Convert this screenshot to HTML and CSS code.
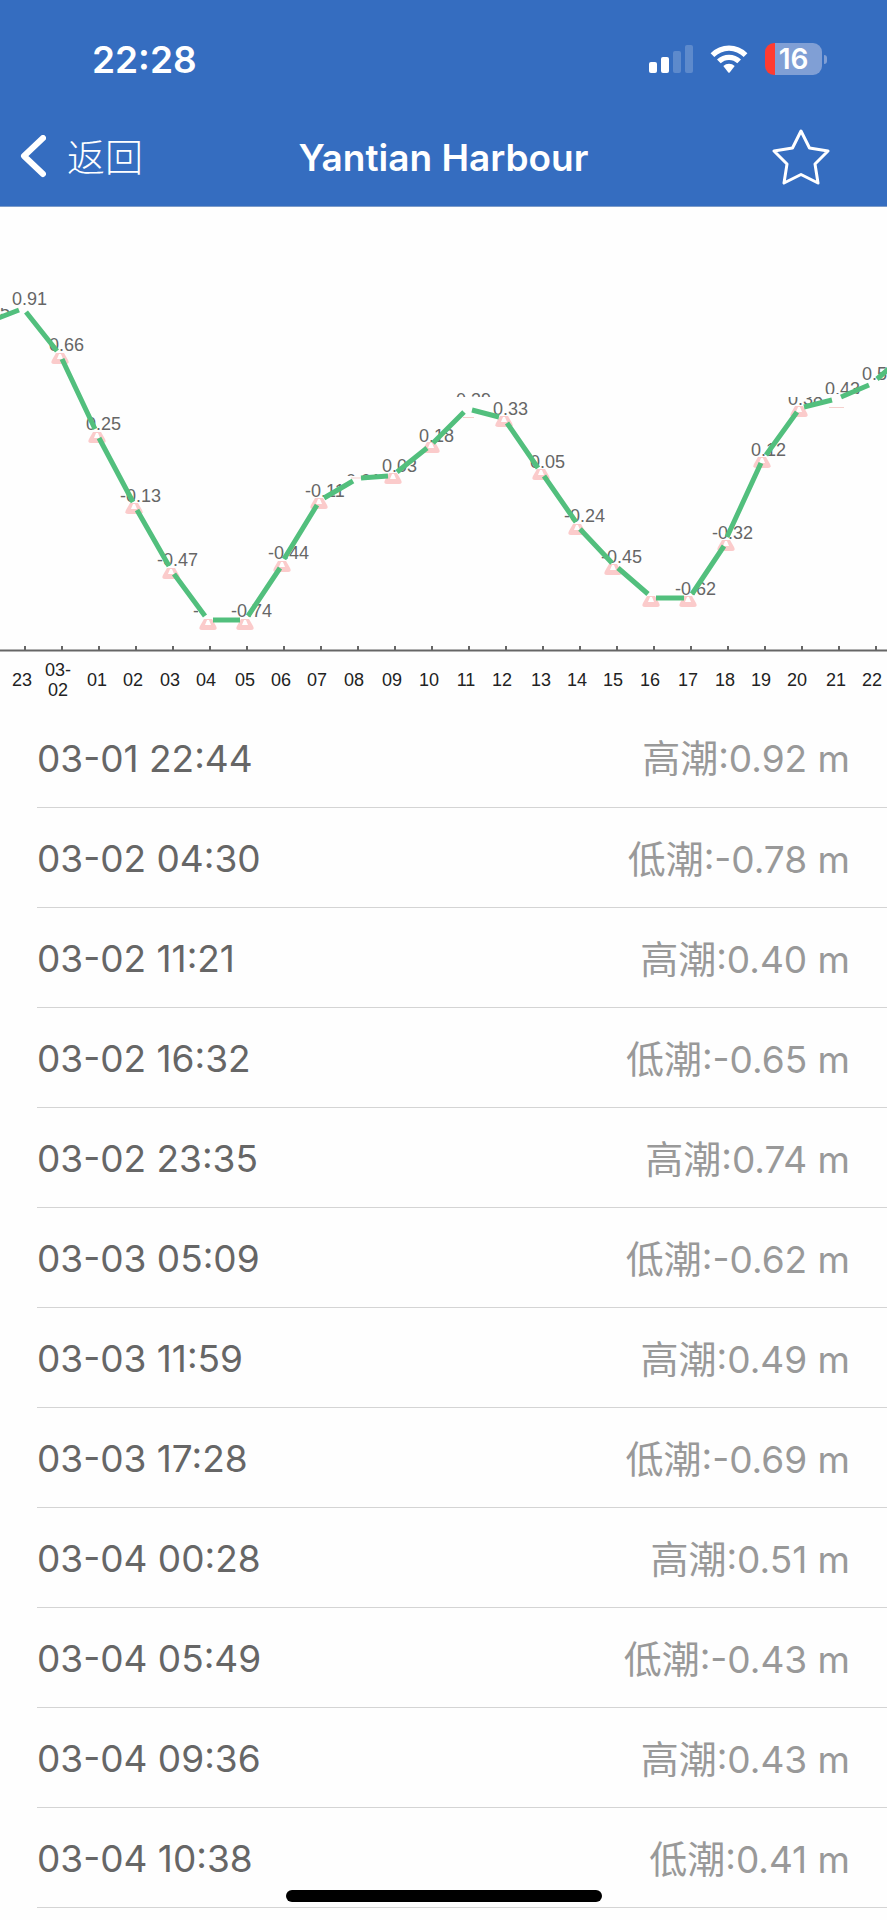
FILE: index.html
```
<!DOCTYPE html>
<html lang="zh-CN">

<head>
    <meta charset="utf-8">
    <meta name="viewport" content="width=device-width, initial-scale=1">
    <title>Yantian Harbour</title>
    <link rel="stylesheet" href="styles.css">
</head>

<body>
    <header class="header">
        <div class="status">
            <span class="time">22:28</span>
            <div class="status-icons">
                <svg class="signal" width="44" height="28" viewBox="0 0 44 28">
                    <rect x="0" y="17" width="8" height="11" rx="2" />
                    <rect x="12" y="12" width="8" height="16" rx="2" />
                    <rect class="off" x="24" y="6" width="8" height="22" rx="2" />
                    <rect class="off" x="36" y="0" width="8" height="28" rx="2" />
                </svg>
                <svg class="wifi" width="38" height="28" viewBox="0 0 38 28">
                    <path d="M0.6 8.2 A26 26 0 0 1 37.4 8.2 L33.7 11.9 A20.8 20.8 0 0 0 4.3 11.9 Z" />
                    <path d="M7 14.6 A17 17 0 0 1 31 14.6 L27.3 18.3 A11.8 11.8 0 0 0 10.7 18.3 Z" />
                    <path d="M13.3 21 A8.1 8.1 0 0 1 24.7 21 L19.7 27.4 Q19 28.2 18.3 27.4 Z" />
                </svg>
                <div class="battery"><span class="battery-num">16</span></div>
            </div>
        </div>
        <nav class="nav">
            <a class="back" href="#">
                <svg width="26" height="44" viewBox="0 0 26 44">
                    <path d="M23 3 L4 21 L23 39" />
                </svg>
                返回
            </a>
            <h1 class="title">Yantian Harbour</h1>
            <button class="star" type="button" aria-label="收藏">
                <svg width="58" height="56" viewBox="0 0 58 56">
                    <path d="M29 2 L37.5 19 L56 22 L43 35 L46 54 L29 45.500 L12 54 L15 35 L2 22 L20.500 19 Z" />
                </svg>
            </button>
        </nav>
    </header>

    <main>
        <svg class="chart" viewBox="0 0 887 500">
            <defs>
                <g id="mark">
                    <path class="mark-pink" d="M-4 -11 H4 L8 -4 Q10 0 6 0 H-6 Q-10 0 -8 -4 Z" />
                    <path class="mark-hole" d="M-1 -10 H1 L3 -5 H-3 Z" />
                </g>
                <clipPath id="c1"><rect x="0" y="101" width="12" height="10" /></clipPath>
                <clipPath id="c2"><rect x="190" y="390" width="8" height="20" /></clipPath>
                <clipPath id="c3"><rect x="340" y="266" width="42" height="3" /></clipPath>
                <clipPath id="c4"><rect x="450" y="180" width="50" height="10" /></clipPath>
                <clipPath id="c5"><rect x="780" y="190" width="50" height="12" /></clipPath>
                <clipPath id="c6"><rect x="820" y="170" width="50" height="17" /></clipPath>
            </defs>

            <!-- values -->
            <g class="values">
                <text x="-25" y="110" clip-path="url(#c1)">0.85</text>
                <text x="12" y="98">0.91</text>
                <text x="49" y="144">0.66</text>
                <text x="86" y="223">0.25</text>
                <text x="120" y="295">-0.13</text>
                <text x="157" y="359">-0.47</text>
                <text x="193" y="410" clip-path="url(#c2)">-0.73</text>
                <text x="231" y="410">-0.74</text>
                <text x="268" y="352">-0.44</text>
                <text x="305" y="290">-0.11</text>
                <text x="346" y="280" clip-path="url(#c3)">0.01</text>
                <text x="382" y="265">0.03</text>
                <text x="419" y="235">0.18</text>
                <text x="456" y="199" clip-path="url(#c4)">0.39</text>
                <text x="493" y="208">0.33</text>
                <text x="530" y="261">0.05</text>
                <text x="564" y="315">-0.24</text>
                <text x="601" y="356">-0.45</text>
                <text x="675" y="388">-0.62</text>
                <text x="712" y="332">-0.32</text>
                <text x="751" y="249">0.12</text>
                <text x="788" y="198" clip-path="url(#c5)">0.38</text>
                <text x="825" y="188" clip-path="url(#c6)">0.43</text>
                <text x="862" y="173">0.53</text>
            </g>

            <!-- markers -->
            <use href="#mark" x="60" y="157" />
            <use href="#mark" x="97" y="236" />
            <use href="#mark" x="134" y="307" />
            <use href="#mark" x="171" y="372" />
            <use href="#mark" x="208" y="423" />
            <use href="#mark" x="245" y="423" />
            <use href="#mark" x="282" y="365" />
            <use href="#mark" x="319" y="302" />
            <use href="#mark" x="393" y="277" />
            <use href="#mark" x="431" y="246" />
            <use href="#mark" x="504" y="220" />
            <use href="#mark" x="541" y="273" />
            <use href="#mark" x="577" y="328" />
            <use href="#mark" x="613" y="368" />
            <use href="#mark" x="651" y="400" />
            <use href="#mark" x="688" y="400" />
            <use href="#mark" x="726" y="344" />
            <use href="#mark" x="762" y="261" />
            <use href="#mark" x="799" y="210" />
            <path class="mark-line" d="M463 210.500 H474 M829 200.500 H844 M351 271 H361" />

            <!-- tide line, broken at every hour -->
            <path class="tide" d="M-4 112 L19 103 M26 105 L57 144 M62 152 L95 222 M99 231 L133 295
                M137 303 L169 359 M174 367 L205 409 M213 413 H240 M248 409 L280 361 M284 352 L317 298
                M324 291 L353 274 M361 271 L388 269 M397 265 L427 241 M433 236 L464 205 M472 203 L499 210
                M507 216 L538 261 M544 269 L576 315 M580 322 L612 356 M618 361 L648 387 M656 391 H684
                M692 387 L724 339 M727 330 L761 256 M766 248 L797 205 M804 200 L832 193 M841 190 L869 178
                M877 172 L892 159" />

            <!-- axis -->
            <path class="axis" d="M0 443.500 H887 M25 439 v5 m37 -5 v5 m37 -5 v5 m37 -5 v5 m37 -5 v5 m37 -5 v5
                m37 -5 v5 m37 -5 v5 m37 -5 v5 m37 -5 v5 m37 -5 v5 m37 -5 v5 m37 -5 v5 m37 -5 v5 m37 -5 v5
                m37 -5 v5 m37 -5 v5 m37 -5 v5 m37 -5 v5 m37 -5 v5 m37 -5 v5 m37 -5 v5 m37 -5 v5 m37 -5 v5" />
            <g class="hours">
                <text x="22" y="479">23</text>
                <text x="58" y="469">03-</text>
                <text x="58" y="489">02</text>
                <text x="97" y="479">01</text>
                <text x="133" y="479">02</text>
                <text x="170" y="479">03</text>
                <text x="206" y="479">04</text>
                <text x="245" y="479">05</text>
                <text x="281" y="479">06</text>
                <text x="317" y="479">07</text>
                <text x="354" y="479">08</text>
                <text x="392" y="479">09</text>
                <text x="429" y="479">10</text>
                <text x="466" y="479">11</text>
                <text x="502" y="479">12</text>
                <text x="541" y="479">13</text>
                <text x="577" y="479">14</text>
                <text x="613" y="479">15</text>
                <text x="650" y="479">16</text>
                <text x="688" y="479">17</text>
                <text x="725" y="479">18</text>
                <text x="761" y="479">19</text>
                <text x="797" y="479">20</text>
                <text x="836" y="479">21</text>
                <text x="872" y="479">22</text>
            </g>
        </svg>

        <div class="list">
            <table class="tides">
                <tr><td>03-01 22:44</td><td class="level"><span class="kind">高潮</span>:0.92 m</td></tr>
                <tr><td>03-02 04:30</td><td class="level"><span class="kind">低潮</span>:-0.78 m</td></tr>
                <tr><td>03-02 11:21</td><td class="level"><span class="kind">高潮</span>:0.40 m</td></tr>
                <tr><td>03-02 16:32</td><td class="level"><span class="kind">低潮</span>:-0.65 m</td></tr>
                <tr><td>03-02 23:35</td><td class="level"><span class="kind">高潮</span>:0.74 m</td></tr>
                <tr><td>03-03 05:09</td><td class="level"><span class="kind">低潮</span>:-0.62 m</td></tr>
                <tr><td>03-03 11:59</td><td class="level"><span class="kind">高潮</span>:0.49 m</td></tr>
                <tr><td>03-03 17:28</td><td class="level"><span class="kind">低潮</span>:-0.69 m</td></tr>
                <tr><td>03-04 00:28</td><td class="level"><span class="kind">高潮</span>:0.51 m</td></tr>
                <tr><td>03-04 05:49</td><td class="level"><span class="kind">低潮</span>:-0.43 m</td></tr>
                <tr><td>03-04 09:36</td><td class="level"><span class="kind">高潮</span>:0.43 m</td></tr>
                <tr><td>03-04 10:38</td><td class="level"><span class="kind">低潮</span>:0.41 m</td></tr>
            </table>
        </div>
    </main>

    <div class="home-bar"></div>
</body>

</html>
```

FILE: styles.css
```
* {
    box-sizing: border-box;
}

body {
    margin: 0;
    background: #fefefe;
    font-family: Inter, "Noto Sans CJK SC", sans-serif;
}

/* header */
.header {
    background: #356dc0;
    border-bottom: 1px solid #7d9cc9;
    color: #fff;
}

.status {
    display: flex;
    justify-content: space-between;
    align-items: center;
    height: 108px;
    padding: 10px 65px 0 92px;
}

.time {
    font-size: 37px;
    font-weight: 600;
}

.status-icons {
    display: flex;
    align-items: center;
    gap: 17px;
}

.signal,
.wifi {
    fill: #fff;
}

.off {
    opacity: 0.2;
}

.battery {
    position: relative;
    display: flex;
    align-items: center;
    justify-content: center;
    width: 57px;
    height: 32px;
    border-radius: 9px;
    background: linear-gradient(to right, #ff3b30 10px, #809fd5 10px);
}

.battery::after {
    content: "";
    position: absolute;
    left: 59px;
    top: 12px;
    width: 3px;
    height: 9px;
    border-radius: 0 4px 4px 0;
    background: #809fd5;
}

.battery-num {
    font-size: 28px;
    font-weight: 600;
}

.nav {
    display: grid;
    grid-template-columns: 1fr auto 1fr;
    align-items: center;
    height: 98px;
    padding: 0 57px 0 20px;
}

.back {
    display: flex;
    align-items: center;
    gap: 21px;
    color: #fff;
    font-size: 38px;
    font-weight: 300;
    line-height: 44px;
    text-decoration: none;
}

.back path {
    fill: none;
    stroke: #fff;
    stroke-width: 6;
    stroke-linecap: round;
    stroke-linejoin: round;
}

.title {
    margin: 0;
    padding-left: 37px;
    font-size: 37px;
    font-weight: 600;
}

.star {
    justify-self: end;
    display: flex;
    padding: 0;
    border: 0;
    background: none;
}

.star path {
    fill: none;
    stroke: #fff;
    stroke-width: 3;
    stroke-linejoin: round;
}

/* chart */
.chart {
    display: block;
    width: 100%;
    font-family: "Liberation Sans", Arial, sans-serif;
    font-size: 18px;
}

.values {
    fill: #666;
}

.hours {
    fill: #222;
    text-anchor: middle;
}

.tide {
    fill: none;
    stroke: #52bf7d;
    stroke-width: 5;
}

.axis {
    fill: none;
    stroke: #666;
    stroke-width: 2;
}

.mark-pink {
    fill: #fbcbcb;
}

.mark-hole {
    fill: #fff;
}

.mark-line {
    fill: none;
    stroke: #f5d0cd;
    stroke-width: 1;
}

/* list */
.list {
    padding-left: 37px;
}

.tides {
    width: 100%;
    border-collapse: collapse;
    font-size: 37px;
    line-height: 48px;
    color: #666;
}

.tides td {
    height: 100px;
    padding: 4px 0 0;
    border-bottom: 1px solid #d4d4d4;
    vertical-align: middle;
}

.tides .level {
    padding-right: 37px;
    color: #999;
    text-align: right;
}

.kind {
    font-size: 38px;
}

.home-bar {
    position: fixed;
    left: 50%;
    bottom: 18px;
    width: 316px;
    height: 12px;
    margin-left: -158px;
    border-radius: 6px;
    background: #000;
}
```
